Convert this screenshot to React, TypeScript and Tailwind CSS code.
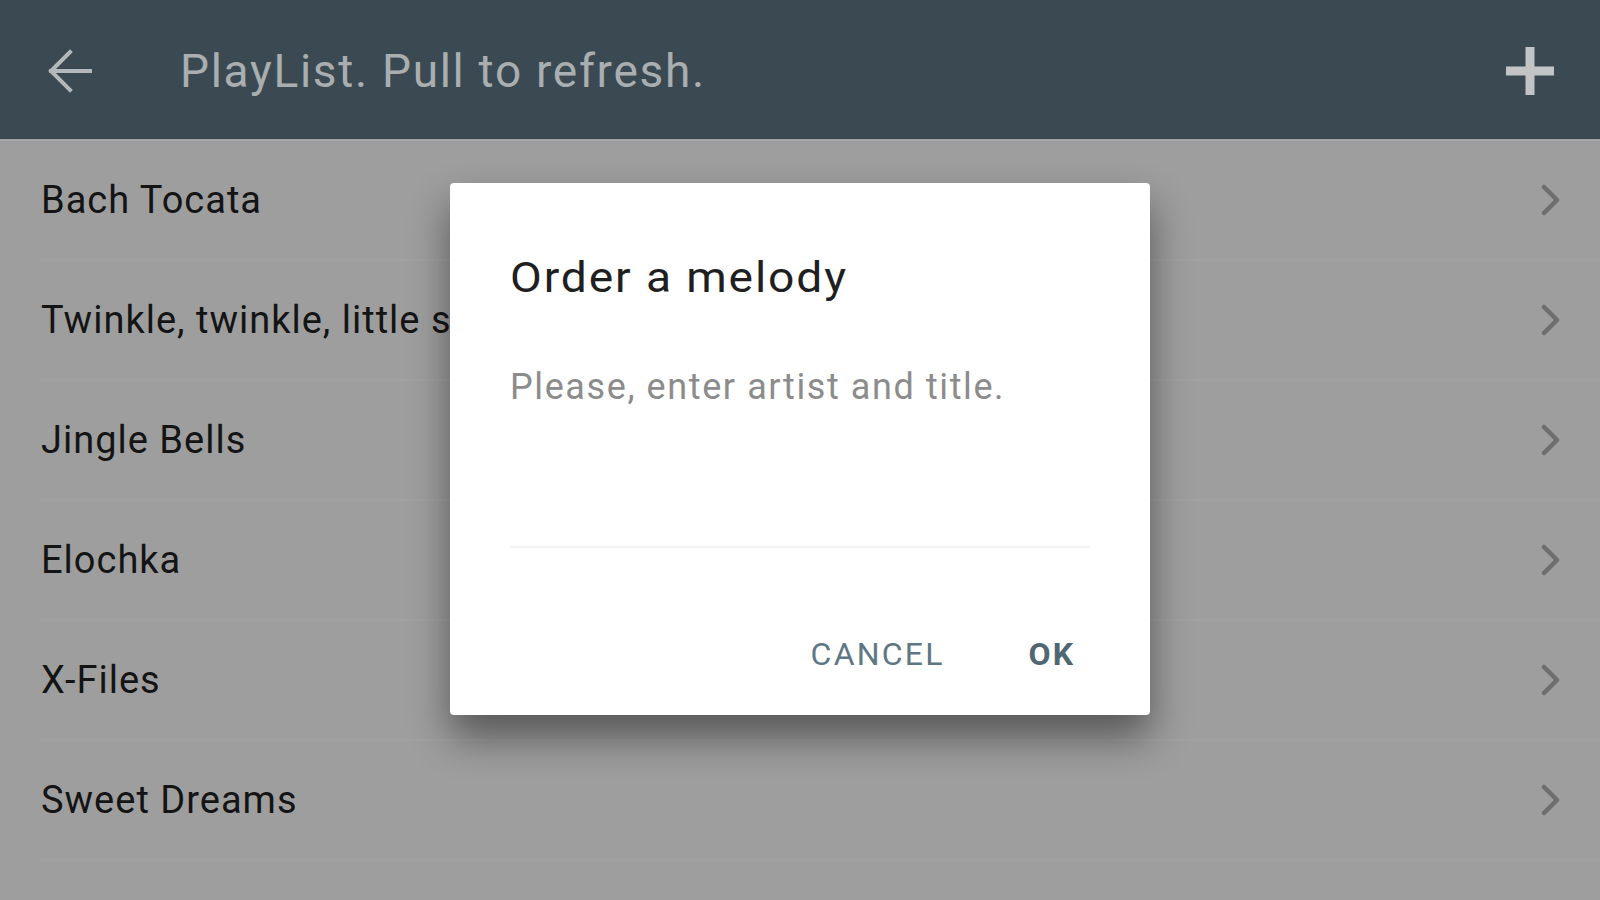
const songs = [
  "Bach Tocata",
  "Twinkle, twinkle, little star",
  "Jingle Bells",
  "Elochka",
  "X-Files",
  "Sweet Dreams",
]

function BackArrow() {
  return (
    <svg width="44" height="44" viewBox="0 0 44 44" fill="none" stroke="#b3b8bb" strokeWidth="4" strokeLinecap="square">
      <path d="M3 22H42" />
      <path d="M22 3L3 22L22 41" />
    </svg>
  )
}

function PlusIcon() {
  return (
    <svg width="48" height="48" viewBox="0 0 48 48" fill="none" stroke="#c2c4c5" strokeWidth="9">
      <path d="M24 0V48" />
      <path d="M0 24H48" />
    </svg>
  )
}

function Chevron() {
  return (
    <svg width="22" height="32" viewBox="0 0 22 32" fill="none" stroke="#6e6e6e" strokeWidth="4.5" strokeLinecap="round" strokeLinejoin="round">
      <path d="M4 3L17 16L4 29" />
    </svg>
  )
}

export default function App() {
  return (
    <div className="relative w-[1600px] h-[900px] overflow-hidden bg-[#9e9e9e] font-['Roboto',sans-serif]">
      <header className="h-[141px] bg-[#3b4a52] flex items-center pt-[3px] pl-[48px] pr-[46px] border-b-2 border-[#a5a5a5]">
        <BackArrow />
        <h1 className="ml-[88px] flex-1 text-[46px] leading-[56px] tracking-[1.7px] text-[#a9aeb1] font-normal">
          PlayList. Pull to refresh.
        </h1>
        <PlusIcon />
      </header>

      <ul>
        {songs.map((s) => (
          <li
            key={s}
            className="ml-[41px] h-[120px] flex items-center justify-between pr-[38px] border-b-2 border-[#a2a2a2]"
          >
            <span className="text-[38px] leading-[48px] tracking-[1px] text-[#141414]">{s}</span>
            <Chevron />
          </li>
        ))}
      </ul>

      <div className="absolute left-[450px] top-[183px] w-[700px] h-[532px] bg-white rounded-[4px] shadow-[0_22px_40px_rgba(0,0,0,0.45)] px-[60px] pt-[70px] flex flex-col">
        <h2 className="self-start origin-left scale-x-[1.1] text-[42px] leading-[50px] tracking-[1.7px] text-[#1f1f1f] font-normal">
          Order a melody
        </h2>
        <p className="mt-[62px] text-[36px] leading-[44px] tracking-[1.6px] text-[#8c8c8c]">Please, enter artist and title.</p>
        <div className="mt-[137px] h-[2px] bg-[#f3f3f3]" />
        <div className="mt-[86px] flex justify-end items-center pr-[15px]">
          <button className="text-[32px] leading-[40px] tracking-[2.2px] text-[#5f7784] font-normal">CANCEL</button>
          <button className="ml-[84px] text-[32px] leading-[40px] tracking-[2px] text-[#4f6773] font-bold">OK</button>
        </div>
      </div>
    </div>
  )
}
